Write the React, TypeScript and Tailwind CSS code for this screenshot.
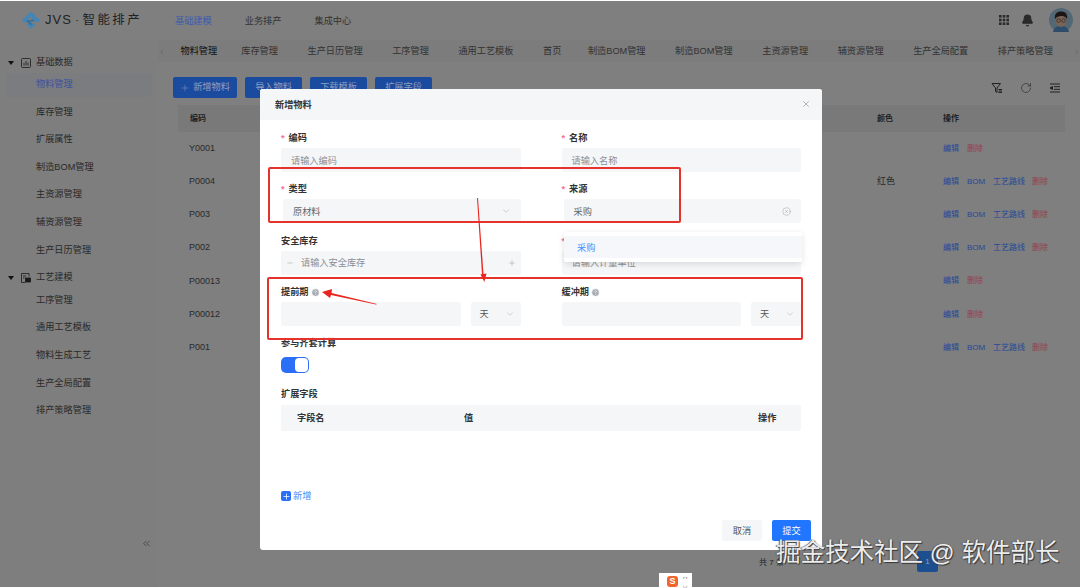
import React from "react";
import { ChevronDown, ChevronLeft, ChevronRight, ChevronsLeft, Plus, Minus, X, RotateCw, Bell, CircleHelp, CircleX } from "lucide-react";

const FONT = "[font-family:'Liberation_Sans','Noto_Sans_CJK_SC',sans-serif]";

const Logo = () => (
  <svg width="18" height="19" viewBox="0 0 20 20" className="shrink-0 relative z-10">
    <path d="M10 0 L20 10 L17 12.5 L10 5.5 L3 12.5 L0 10 Z" fill="#3f86bb" />
    <path d="M10 7 L15 11 L8.5 11 L12 14 L10 15.5 L4.5 11 L6 9.5 L11 9.5 Z" fill="#36729f" />
    <path d="M5 14 L10 19.5 L15 14 L12.5 13 L10 15.8 L7.5 13 Z" fill="#3f86bb" />
  </svg>
);

const Avatar = () => (
  <svg width="24" height="24" viewBox="0 0 24 24">
    <circle cx="12" cy="12" r="12" fill="#a6cfe8" />
    <path d="M4 24 C5 19 8 18 12 18 C16 18 19 19 20 24 Z" fill="#5a9ad6" />
    <ellipse cx="12" cy="12.5" rx="5.5" ry="6.5" fill="#f2c6ae" />
    <path d="M6 11 C5 5 9 3.5 12.5 3.5 C16.5 3.5 19 6.5 18 11 C16.5 8.5 14 8 12 8 C10 8.500 7.500 8.500 6 11 Z" fill="#3a2a28" />
    <circle cx="9.500" cy="12.500" r="1.800" fill="none" stroke="#444" strokeWidth="0.600" />
    <circle cx="14.500" cy="12.500" r="1.800" fill="none" stroke="#444" strokeWidth="0.600" />
  </svg>
);

const Dots = () => (
  <svg width="10" height="10" viewBox="0 0 10 10" fill="#555">
    {[0, 3.7, 7.4].flatMap((x) => [0, 3.7, 7.4].map((y) => <rect key={`${x}-${y}`} x={x} y={y} width="2.6" height="2.6" />))}
  </svg>
);

const Funnel = () => (
  <svg width="12" height="12" viewBox="0 0 12 12" fill="none" stroke="#444" strokeWidth="1">
    <path d="M1 1.500 H9.500 L6 6 V10.500 L4.500 9.500 V6 Z" />
    <path d="M7.500 7.500 H11 M7.500 9 H11 M7.500 10.500 H11" />
  </svg>
);

const ListToggle = () => (
  <svg width="12" height="12" viewBox="0 0 12 12" fill="none" stroke="#444" strokeWidth="1">
    <path d="M1 2 H11 M5 4.700 H11 M5 7.300 H11 M1 10 H11" />
    <path d="M3.500 4.500 L1 6 L3.500 7.500 Z" fill="#444" />
  </svg>
);

const GroupIcon = ({ kind }: { kind: number }) =>
  kind === 0 ? (
    <svg width="10" height="10" viewBox="0 0 10 10" fill="none" stroke="#333" strokeWidth="0.800">
      <rect x="0.500" y="0.500" width="9" height="9" rx="1" />
      <path d="M3 7.500 V5 M5 7.500 V3 M7 7.500 V4.500" />
    </svg>
  ) : (
    <svg width="10" height="10" viewBox="0 0 10 10" fill="none" stroke="#333" strokeWidth="0.800">
      <path d="M4 9.500 H0.500 V0.500 H8 V3.500" />
      <rect x="4.500" y="5" width="5" height="4" fill="#333" />
      <path d="M2 3 H5 M2 5 H3.500" />
    </svg>
  );

const Group = ({ title, kind, items, active }: { title: string; kind: number; items: string[]; active?: string }) => (
  <div>
    <div className="h-[21px] flex items-center text-[9.2px] text-[#555]">
      <span className="w-0 h-0 ml-[8px] border-x-[3px] border-x-transparent border-t-[4px] border-t-[#222]" />
      <span className="ml-[7px] flex"><GroupIcon kind={kind} /></span>
      <span className="ml-[5px]">{title}</span>
    </div>
    {items.map((t) => (
      <div
        key={t}
        className={`h-[24px] mb-[3.6px] mx-[6px] pl-[30px] flex items-center rounded-[2px] text-[9.2px] ${
          t === active ? "bg-[#f6f9ff]" : "text-[#555]"
        }`}
      >
        {t === active ? <span className="relative z-10 text-[#3d52a0]">{t}</span> : t}
      </div>
    ))}
  </div>
);

const Sidebar = () => (
  <aside className="w-[158px] shrink-0 pt-[12px] pb-[39px] flex flex-col bg-[#fcfcfc]">
    <div className="mb-[1.500px]">
      <Group title="基础数据" kind={0} active="物料管理" items={["物料管理", "库存管理", "扩展属性", "制造BOM管理", "主资源管理", "辅资源管理", "生产日历管理"]} />
    </div>
    <Group title="工艺建模" kind={1} items={["工序管理", "通用工艺模板", "物料生成工艺", "生产全局配置", "排产策略管理"]} />
    <div className="mt-auto flex justify-end pr-[6px]"><ChevronsLeft size={11} strokeWidth={1.2} color="#444" /></div>
  </aside>
);

const tabs = ["物料管理", "库存管理", "生产日历管理", "工序管理", "通用工艺模板", "首页", "制造BOM管理", "制造BOM管理", "主资源管理", "辅资源管理", "生产全局配置", "排产策略管理"];

const TabStrip = () => (
  <div className="h-[22px] flex items-center bg-[#f9f9f9] text-[9.2px] text-[#666] whitespace-nowrap pt-[2px]">
    <ChevronLeft size={8} strokeWidth={1} color="#666" />
    <div className="flex items-center gap-[29.500px] ml-[15px] w-[872px]">
      {tabs.map((t, i) => (
        <span key={i} className={i === 0 ? "text-[#222] mr-[-5.500px]" : i === 5 ? "mr-[-3px]" : ""}>{t}</span>
      ))}
    </div>
    <ChevronRight size={8} strokeWidth={1} color="#666" className="ml-[20px]" />
  </div>
);

const ToolBtn = ({ children, w }: { children: React.ReactNode; w: string }) => (
  <button className={`relative z-10 h-[21px] ${w} rounded-[2px] bg-[#1b4b9e] text-[#8f9fc0] text-[9.2px] flex items-center justify-center gap-[3px]`}>{children}</button>
);

const Ops = ({ full }: { full: boolean }) => (
  <div className="w-[122px] flex text-[8px] text-[#27479a] whitespace-nowrap relative z-10">
    <span className="w-[24px]">编辑</span>
    {full && <span className="w-[26px]">BOM</span>}
    {full && <span className="w-[39px]">工艺路线</span>}
    <span className="text-[#96404f]">删除</span>
  </div>
);

const rows: [string, string, boolean][] = [
  ["Y0001", "", false],
  ["P0004", "红色", true],
  ["P003", "", true],
  ["P002", "", true],
  ["P00013", "", false],
  ["P00012", "", false],
  ["P001", "", true],
];

const Main = () => (
  <main className="flex-1 min-w-0 flex flex-col relative bg-white">
    <TabStrip />
    <div className="flex items-center pl-[15px] pr-[19px] mt-[15px]">
      <div className="flex gap-[8px]">
        <ToolBtn w="w-[64px]"><Plus size={10} strokeWidth={1.2} /> 新增物料</ToolBtn>
        <ToolBtn w="w-[57px]">导入物料</ToolBtn>
        <ToolBtn w="w-[57px]">下载模板</ToolBtn>
        <ToolBtn w="w-[57px]">扩展字段</ToolBtn>
      </div>
      <div className="ml-auto flex gap-[17px]">
        <Funnel />
        <RotateCw size={12} strokeWidth={1.2} color="#444" />
        <ListToggle />
      </div>
    </div>
    <div className="ml-[20px] mr-[15px] mt-[7px]">
      <div className="h-[27px] flex items-center bg-[#f3f3f3] pl-[12px] pt-[1px] text-[8px] font-semibold text-[#444]">
        <span className="flex-1">编码</span>
        <span className="w-[66px]">颜色</span>
        <span className="w-[122px]">操作</span>
      </div>
      {rows.map(([code, color, full]) => (
        <div key={code} className="h-[33.200px] flex items-center pl-[11px] text-[9px] text-[#555]">
          <span className="flex-1">{code}</span>
          <span className="w-[66px]">{color}</span>
          <Ops full={full} />
        </div>
      ))}
    </div>
    <div className="absolute left-[601px] top-[511px] flex items-center text-[8px] text-[#444]">
      <span className="pt-[3px]">共 7 条</span>
      <span className="relative z-10 ml-[133px] w-[21px] h-[21px] rounded-[2px] bg-[#1b4f8f] text-[#8f9fc0] flex items-center justify-center">1</span>
    </div>
  </main>
);

const Label = ({ text, required, help }: { text: string; required?: boolean; help?: boolean }) => (
  <div className="h-[16px] mb-[3px] pt-[4px] flex items-center text-[9.200px] font-semibold text-[#333]">
    {required && <span className="text-[#f5709a] mr-[4px]">*</span>}
    {text}
    {help && <CircleHelp size={9} className="ml-[2px]" color="#fff" fill="#a8adb3" strokeWidth={1.500} />}
  </div>
);

const Text = ({ ph }: { ph: string }) => (
  <div className="h-[24px] rounded-[2px] bg-[#f4f6f8] pl-[10px] flex items-center text-[9.200px] text-[#8a8f96]">
    <span className="pt-[3px]">{ph}</span>
  </div>
);

const Select = ({ value, clear }: { value: string; clear?: boolean }) => (
  <div className="h-[24px] ml-[2px] rounded-[2px] bg-[#f4f6f8] pl-[10px] pr-[10px] flex items-center justify-between text-[9.200px] text-[#666]">
    <span className="pt-[3px]">{value}</span>
    {clear ? <CircleX size={9} strokeWidth={1} color="#888" /> : <ChevronDown size={10} strokeWidth={1} color="#999" />}
  </div>
);

const Period = () => (
  <div className="flex gap-[10px]">
    <div className="flex-1 h-[24px] rounded-[2px] bg-[#f4f6f8]" />
    <div className="w-[50px] h-[24px] rounded-[2px] bg-[#f4f6f8] pl-[9px] pr-[6px] flex items-center justify-between text-[9.200px] text-[#555]">
      <span className="pt-[3px]">天</span>
      <ChevronDown size={10} strokeWidth={1} color="#999" />
    </div>
  </div>
);

const Field = ({ children }: { children: React.ReactNode }) => <div className="h-[51.300px]">{children}</div>;

const Modal = () => (
  <div className="absolute z-20 left-[260px] top-[89px] w-[562px] h-[461px] rounded-[3px] bg-white flex flex-col overflow-hidden">
    <div className="h-[31px] shrink-0 bg-[#f5f6f8] flex items-center justify-between pl-[15px] pr-[11px] text-[9.200px] font-semibold text-[#333]">
      <span className="pt-[3px]">新增物料</span>
      <X size={10} strokeWidth={1} color="#555" className="mb-[2px]" />
    </div>
    <div className="flex-1 px-[21px] pt-[9px]">
      <div className="grid grid-cols-2 gap-x-[41px]">
        <Field><Label text="编码" required /><Text ph="请输入编码" /></Field>
        <Field><Label text="名称" required /><Text ph="请输入名称" /></Field>
        <Field><Label text="类型" required /><Select value="原材料" /></Field>
        <Field><Label text="来源" required /><Select value="采购" clear /></Field>
        <Field>
          <Label text="安全库存" />
          <div className="h-[24px] rounded-[2px] bg-[#f4f6f8] px-[5px] flex items-center text-[9.200px] text-[#8a8f96]">
            <Minus size={8} strokeWidth={1} color="#777" />
            <span className="ml-[7px] pt-[3px]">请输入安全库存</span>
            <Plus size={8} strokeWidth={1} color="#777" className="ml-auto" />
          </div>
        </Field>
        <Field><Label text="计量单位" required /><Text ph="请输入计量单位" /></Field>
        <Field><Label text="提前期" help /><Period /></Field>
        <Field><Label text="缓冲期" help /><Period /></Field>
      </div>
      <div className="h-[16px] pt-[3px] flex items-center text-[9.200px] font-semibold text-[#333]">参与齐套计算</div>
      <div className="mt-[7px] w-[28px] h-[16px] rounded-[5px] bg-[#2a6ff5] flex justify-end items-center pr-[1px]">
        <span className="w-[13px] h-[14px] rounded-[4px] bg-white" />
      </div>
      <div className="mt-[13px] h-[16px] pt-[2px] flex items-center text-[9.200px] font-semibold text-[#333]">扩展字段</div>
      <div className="mt-[3px] h-[26px] pt-[2px] rounded-[2px] bg-[#f4f6f8] flex items-center pl-[16px] text-[9.200px] font-semibold text-[#333]">
        <span className="w-[167px]">字段名</span>
        <span className="flex-1">值</span>
        <span className="w-[43px]">操作</span>
      </div>
      <div className="mt-[57px] flex items-center text-[9.200px] text-[#4a8cf7]">
        <span className="w-[10px] h-[10px] rounded-[2px] bg-[#2a6ff5] flex items-center justify-center">
          <Plus size={9} color="#fff" strokeWidth={2} />
        </span>
        <span className="ml-[2px] pt-[2px]">新增</span>
      </div>
    </div>
    <div className="flex justify-end gap-[10px] pr-[11px] pb-[9px] text-[9.200px]">
      <button className="w-[40px] h-[21px] pt-[3px] rounded-[2px] bg-[#f5f6f8] text-[#555]">取消</button>
      <button className="w-[39px] h-[21px] pt-[3px] rounded-[2px] bg-[#2176ff] text-white">提交</button>
    </div>
  </div>
);

const Dropdown = () => (
  <div className="absolute z-20 left-[564px] top-[232px] w-[238px] h-[30px] py-[4px] bg-white shadow-[0_2px_6px_rgba(0,0,0,0.12)] rounded-[2px]">
    <div className="h-[22px] bg-[#f5f7fa] pl-[13px] pt-[3px] flex items-center text-[9.200px] text-[#3f93ff]">采购</div>
  </div>
);

const Annotations = () => (
  <div className="absolute z-20 inset-0">
    <div className="absolute left-[268px] top-[167px] w-[413px] h-[56px] border-2 border-[#e5332c] rounded-[2px]" />
    <div className="absolute left-[267px] top-[277px] w-[536px] h-[63px] border-2 border-[#e5332c] rounded-[2px]" />
    <svg className="absolute left-0 top-0" width="1080" height="588" fill="#e8261f">
      <polygon points="477,198 478,198 483.500,274 486.500,273.500 484.300,282 480.500,274.500 482,274" />
      <polygon points="377,304 376,304.500 331,295 330,298 322,292 332,289 331.500,293" />
    </svg>
  </div>
);

const Watermark = () => (
  <div className="absolute z-20 left-[776px] top-[538px] whitespace-nowrap text-[24.500px] leading-[30px] text-[#ececec] [text-shadow:1px_1px_1px_#333,-1px_0_1px_#555]">
    掘金技术社区 @ 软件部长
  </div>
);

const Ime = () => (
  <div className="absolute z-20 left-[659px] top-[573px] w-[33px] h-[15px] bg-white flex items-start pl-[8px] pt-[3px] gap-[5px]">
    <span className="w-[11px] h-[11px] rounded-[3px] bg-[#f0662a] text-white text-[9px] font-bold leading-[11px] text-center">S</span>
    <span className="text-[5px] leading-[6px] text-[#333]">⌜⌝<br />⌞⌟</span>
  </div>
);

export default function App() {
  return (
    <div className={`relative w-[1080px] h-[588px] overflow-hidden bg-white ${FONT}`}>
      <div className="h-full flex flex-col">
        <header className="h-[40px] shrink-0 flex items-center bg-white pl-[22px] pr-[7px]">
          <Logo />
          <span className="ml-[5px] w-[97px] text-[#444] whitespace-nowrap flex items-baseline">
            <span className="text-[13px] tracking-[1px]">JVS</span>
            <span className="text-[11px] mx-[3.500px]">·</span>
            <span className="text-[12.500px] tracking-[2.400px]">智能排产</span>
          </span>
          <nav className="ml-[33px] pt-[3px] flex gap-[33px] text-[9.200px] text-[#666]">
            <span className="relative z-10 text-[#3a5cb0]">基础建模</span>
            <span>业务排产</span>
            <span>集成中心</span>
          </nav>
          <div className="ml-auto flex items-center">
            <Dots />
            <Bell size={13} fill="#555" color="#555" className="ml-[12px]" />
            <span className="ml-[15px] flex"><Avatar /></span>
          </div>
        </header>
        <div className="flex-1 min-h-0 flex">
          <Sidebar />
          <Main />
        </div>
      </div>
      <div className="absolute left-0 right-0 top-px bottom-px bg-black/50" />
      <Modal />
      <Dropdown />
      <Annotations />
      <Ime />
      <Watermark />
    </div>
  );
}
